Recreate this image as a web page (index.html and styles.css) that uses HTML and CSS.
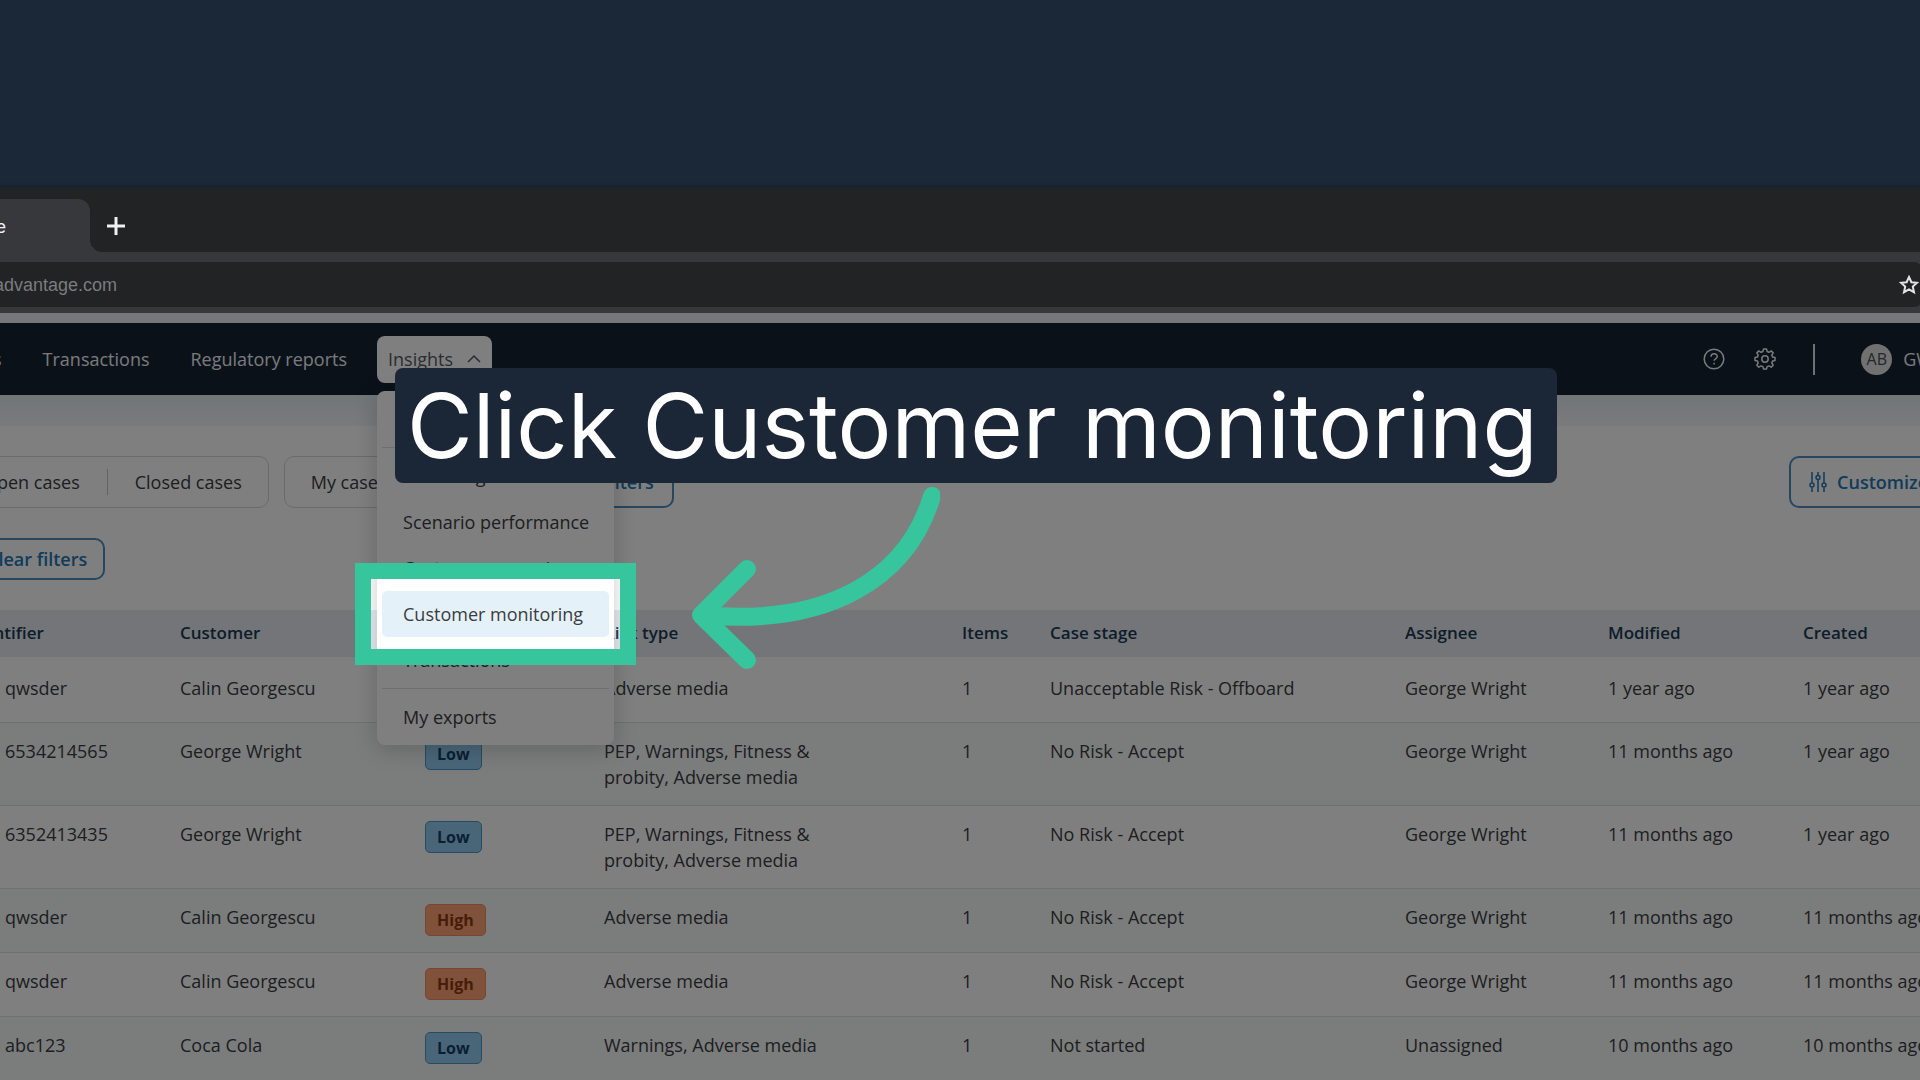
FILE: index.html
```html
<!DOCTYPE html>
<html lang="en">
<head>
    <meta charset="UTF-8">
    <meta name="viewport" content="width=device-width, initial-scale=1.0">
    <title>Cases</title>
    <link rel="stylesheet" href="styles.css">
</head>
<body>
    <div class="window">
        <div class="tab-strip">
            <div class="tab">Advantage</div>
            <button class="new-tab" aria-label="New tab">
                <svg width="20" height="20" viewBox="0 0 20 20"><path d="M10 1v18M1 10h18" stroke="#f1f1f1" stroke-width="3" fill="none"/></svg>
            </button>
        </div>
        <div class="toolbar">
            <div class="address">
                <span>advantage.com</span>
                <svg width="20" height="20" viewBox="0 0 20 20"><path d="M10 2l2.400 5.200 5.600.6-4.200 3.800 1.200 5.600L10 14.400l-5 2.800 1.200-5.600L2 7.800l5.600-.6z" stroke="#e4e4e4" stroke-width="2" fill="none"/></svg>
            </div>
        </div>

        <div class="app">
            <header class="nav">
                <nav class="nav-links">
                    <a href="#">s</a>
                    <a href="#">Transactions</a>
                    <a href="#">Regulatory reports</a>
                    <div class="nav-item">
                        <a href="#" class="open">Insights
                            <svg width="14" height="10" viewBox="0 0 14 10"><path d="M1 8l6-6 6 6" stroke="#54585e" stroke-width="1.500" fill="none"/></svg>
                        </a>
                        <div class="menu">
                            <a href="#">Overview</a>
                            <hr>
                            <a href="#">Screening</a>
                            <a href="#">Scenario performance</a>
                            <a href="#">Customer screening</a>
                            <a href="#" class="active">Customer monitoring</a>
                            <a href="#">Transactions</a>
                            <hr>
                            <a href="#">My exports</a>
                        </div>
                    </div>
                </nav>
                <div class="nav-tools">
                    <button aria-label="Help">
                        <svg width="22" height="22" viewBox="0 0 22 22" fill="none" stroke="#f2f4f7" stroke-width="1.500"><circle cx="11" cy="11" r="9.800"/><path d="M8 8.800c0-4 6.200-4 6.200-.4 0 2.400-3.100 2.300-3.100 4.400M11.100 14.800v1.600"/></svg>
                    </button>
                    <button aria-label="Settings">
                        <svg width="22" height="22" viewBox="0 0 22 22" fill="none" stroke="#f2f4f7" stroke-width="1.500" stroke-linejoin="round"><circle cx="11" cy="11" r="3.200"/><path d="M9.500 1h3l.6 2.500 1.900.8 2.200-1.400 2 2-1.400 2.300.8 1.900 2.400.5v2.900l-2.400.6-.8 1.900 1.400 2.200-2 2-2.200-1.300-1.900.7-.6 2.500h-3l-.6-2.500-1.900-.7-2.200 1.300-2-2 1.400-2.200-.8-1.900L1 12.500V9.600l2.400-.5.8-1.900L2.800 4.900l2-2L7 4.300l1.900-.8z"/></svg>
                    </button>
                    <span class="nav-divider"></span>
                    <div class="account"><span class="avatar">AB</span>GW</div>
                </div>
            </header>

            <main>
                <div class="filters">
                    <div class="segment"><button>Open cases</button><button>Closed cases</button></div>
                    <div class="segment"><button>My cases</button><button>My team</button></div>
                    <button class="outline">All filters</button>
                    <button class="outline customize">
                        <svg width="18" height="20" viewBox="0 0 18 20" fill="none" stroke="#2376b5" stroke-width="1.500"><path d="M3 0v10.500M3 15.500V20M9 0v3M9 8v12M15 0v10.500M15 15.500V20"/><circle cx="3" cy="13" r="2"/><circle cx="9" cy="5.500" r="2"/><circle cx="15" cy="13" r="2"/></svg>
                        Customize
                    </button>
                </div>
                <button class="outline clear">Clear filters</button>

                <table>
                    <colgroup>
                        <col class="c-id"><col class="c-customer"><col class="c-risk"><col class="c-type"><col class="c-items"><col class="c-stage"><col class="c-assignee"><col class="c-modified"><col>
                    </colgroup>
                    <thead>
                        <tr><th>Identifier</th><th>Customer</th><th>Risk level</th><th>Risk type</th><th>Items</th><th>Case stage</th><th>Assignee</th><th>Modified</th><th>Created</th></tr>
                    </thead>
                    <tbody>
                        <tr><td>qwsder</td><td>Calin Georgescu</td><td><span class="badge high">High</span></td><td>Adverse media</td><td>1</td><td>Unacceptable Risk - Offboard</td><td>George Wright</td><td>1 year ago</td><td>1 year ago</td></tr>
                        <tr><td>6534214565</td><td>George Wright</td><td><span class="badge low">Low</span></td><td>PEP, Warnings, Fitness &amp; probity, Adverse media</td><td>1</td><td>No Risk - Accept</td><td>George Wright</td><td>11 months ago</td><td>1 year ago</td></tr>
                        <tr><td>6352413435</td><td>George Wright</td><td><span class="badge low">Low</span></td><td>PEP, Warnings, Fitness &amp; probity, Adverse media</td><td>1</td><td>No Risk - Accept</td><td>George Wright</td><td>11 months ago</td><td>1 year ago</td></tr>
                        <tr><td>qwsder</td><td>Calin Georgescu</td><td><span class="badge high">High</span></td><td>Adverse media</td><td>1</td><td>No Risk - Accept</td><td>George Wright</td><td>11 months ago</td><td>11 months ago</td></tr>
                        <tr><td>qwsder</td><td>Calin Georgescu</td><td><span class="badge high">High</span></td><td>Adverse media</td><td>1</td><td>No Risk - Accept</td><td>George Wright</td><td>11 months ago</td><td>11 months ago</td></tr>
                        <tr><td>abc123</td><td>Coca Cola</td><td><span class="badge low">Low</span></td><td>Warnings, Adverse media</td><td>1</td><td>Not started</td><td>Unassigned</td><td>10 months ago</td><td>10 months ago</td></tr>
                    </tbody>
                </table>
            </main>

            <!-- walkthrough step -->
            <div class="spotlight"></div>
            <div class="callout">Click Customer monitoring</div>
            <svg class="arrow" width="260" height="200" viewBox="0 0 260 200" fill="none" stroke="#36c59d" stroke-width="18" stroke-linecap="round" stroke-linejoin="round">
                <path d="M22 134C150 146 228 96 252 15"/>
                <path d="M67 88L21 134L67 179"/>
            </svg>
        </div>
    </div>
</body>
</html>
```
FILE: styles.css
```css
* {
    box-sizing: border-box;
}
body {
    margin: 0;
    background: #1b2838;
    font-family: "Open Sans", sans-serif;
    font-size: 18px;
    line-height: 26px;
    color: #3a3d42;
    overflow: hidden;
}
button {
    font: inherit;
    color: inherit;
    background: none;
    border: none;
    padding: 0;
}
a {
    color: inherit;
    text-decoration: none;
}
svg {
    display: block;
}

/* the window runs past both sides of the screen */
.window {
    margin: 187px -60px 0 -44px;
    box-shadow: 0 0 4px rgba(0, 0, 0, 0.4);
}
.tab-strip {
    display: flex;
    height: 65px;
    padding-top: 12px;
    background: #212324;
    font-family: "Liberation Sans", Arial, sans-serif;
}
.tab {
    position: relative;
    width: 134px;
    padding: 15px 84px 0 0;
    display: flex;
    justify-content: flex-end;
    background: #37383b;
    border-radius: 0 12px 0 0;
    color: #f1f1f1;
}
.tab::after {
    content: "";
    position: absolute;
    left: 100%;
    bottom: 0;
    width: 12px;
    height: 12px;
    background: radial-gradient(circle at 100% 0, transparent 12px, #37383b 12px);
}
.new-tab {
    margin: 0 0 0 16px;
}
.toolbar {
    height: 61px;
    padding: 10px 58px 6px 0;
    background: #37383b;
    font-family: "Liberation Sans", Arial, sans-serif;
}
.address {
    display: flex;
    align-items: center;
    justify-content: space-between;
    height: 45px;
    padding: 0 3px 0 38px;
    border-radius: 0 8px 8px 0;
    background: #212324;
    color: #7b7c7e;
}

.app {
    position: relative;
    overflow: hidden;
    padding-top: 10px;
    background: #eef1f7;
}
.nav {
    display: flex;
    justify-content: space-between;
    align-items: center;
    height: 72px;
    padding: 0 47px 0 26px;
    background: #162232;
    color: #f2f4f7;
    font-weight: 500;
}
.nav-links {
    display: flex;
    gap: 19px;
}
.nav-links > a, .open {
    display: flex;
    align-items: center;
    gap: 14px;
    height: 47px;
    padding: 0 11px;
}
.nav-item {
    position: relative;
}
.open {
    border-radius: 8px;
    background: #fff;
    color: #54585e;
}
.menu {
    position: absolute;
    z-index: 1;
    top: 55px;
    left: 0;
    width: 237px;
    padding: 5px;
    border-radius: 8px;
    background: #fff;
    box-shadow: 0 4px 24px rgba(0, 0, 0, 0.2);
    color: #3a3d42;
    font-weight: 400;
}
.menu a {
    display: block;
    padding: 10px 21px;
    border-radius: 5px;
    white-space: nowrap;
}
.menu .active {
    background: #e5f1f8;
}
.menu hr {
    margin: 5px 0;
    border: none;
    border-top: 1px solid #dcdfe2;
}
.nav-tools {
    display: flex;
    align-items: center;
    gap: 29px;
}
.nav-divider {
    width: 2px;
    height: 31px;
    margin: 0 17px 0 8px;
    background: #dfe2e6;
}
.account {
    display: flex;
    align-items: center;
    gap: 11px;
}
.avatar {
    width: 31px;
    height: 31px;
    border-radius: 50%;
    background: #e3e3e3;
    color: #4a4e55;
    font-size: 16px;
    line-height: 31px;
    text-align: center;
}

main {
    padding-top: 61px;
    background: linear-gradient(#e4ecf2, #f3f5f6) top / 100% 31px no-repeat #fff;
}
.filters {
    display: flex;
    gap: 15px;
    padding-right: 32px;
}
.segment {
    display: flex;
    align-items: center;
    height: 52px;
    border: 1px solid #d4d6d9;
    border-radius: 10px;
}
.segment button {
    padding: 0 27px;
}
.segment button:last-child {
    padding-right: 26px;
}
.segment button:first-child {
    padding-left: 26px;
}
.segment button + button {
    border-left: 1px solid #c4c6c9;
}
.outline {
    display: flex;
    align-items: center;
    gap: 10px;
    height: 52px;
    padding: 0 18px;
    border: 2px solid #4b8fc4;
    border-radius: 10px;
    color: #2376b5;
    font-weight: 600;
}
.customize {
    margin-left: auto;
}
.clear {
    height: 42px;
    margin: 30px 13px;
    padding: 0 16px;
}

table {
    width: 100%;
    table-layout: fixed;
    border-collapse: collapse;
}
.c-id { width: 212px; }
.c-customer { width: 245px; }
.c-risk { width: 179px; }
.c-type { width: 358px; }
.c-items { width: 88px; }
.c-stage { width: 355px; }
.c-assignee { width: 203px; }
.c-modified { width: 195px; }
th, td {
    padding: 15px 12px;
    text-align: left;
    vertical-align: top;
    white-space: nowrap;
}
th {
    height: 48px;
    padding: 10px 12px;
    border-bottom: 3px solid #fcfcfd;
    background: #e6eaf1;
    color: #1c3a54;
    font-size: 17px;
    line-height: 26px;
    font-weight: 600;
}
td {
    height: 64px;
    border-bottom: 1px solid #dfe2e3;
}
td:first-child {
    padding-left: 49px;
}
td:nth-child(4) {
    padding-right: 90px;
    white-space: normal;
}
tbody tr:nth-child(even) {
    background: #f6f9f9;
}
.badge {
    display: block;
    width: fit-content;
    padding: 2px 11px;
    border: 1px solid;
    border-radius: 5px;
    font-size: 16px;
    font-weight: 700;
}
.low {
    background: #93cdf1;
    border-color: #4c97c8;
    color: #153f68;
}
.high {
    background: #ffa577;
    border-color: #f58b58;
    color: #8f3a10;
}

.spotlight {
    position: absolute;
    z-index: 2;
    top: 250px;
    left: 399px;
    width: 281px;
    height: 102px;
    border: 16px solid #36c59d;
    box-shadow: 0 0 0 3000px rgba(0, 0, 0, 0.5);
}
.callout {
    position: absolute;
    z-index: 3;
    top: 55px;
    left: 439px;
    padding: 1px 19px 0 12px;
    border-radius: 8px;
    background: #1b2737;
    color: #fff;
    font-family: Inter, sans-serif;
    font-size: 90px;
    line-height: 114px;
    white-space: nowrap;
}
.arrow {
    position: absolute;
    z-index: 3;
    top: 168px;
    left: 724px;
}
```
